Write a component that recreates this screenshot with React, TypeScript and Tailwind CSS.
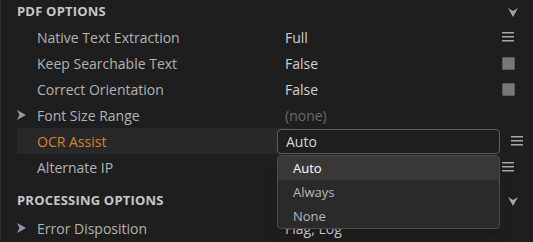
import React from 'react';

type Row = {
  label: string;
  value: string;
  kind?: 'menu' | 'check';
  expandable?: boolean;
  muted?: boolean;
  active?: boolean;
};

const pdfRows: Row[] = [
  { label: 'Native Text Extraction', value: 'Full', kind: 'menu' },
  { label: 'Keep Searchable Text', value: 'False', kind: 'check' },
  { label: 'Correct Orientation', value: 'False', kind: 'check' },
  { label: 'Font Size Range', value: '(none)', expandable: true, muted: true },
  { label: 'OCR Assist', value: 'Auto', kind: 'menu', active: true },
  { label: 'Alternate IP', value: '', kind: 'menu' },
];

const ExpandArrow = () => (
  <svg width="9" height="10" viewBox="0 0 9 10">
    <polygon points="0,0 9,5 0,10 2.5,5" fill="#8d9aab" />
  </svg>
);

const CollapseArrow = () => (
  <svg width="10" height="9" viewBox="0 0 10 9">
    <polygon points="0,0 5,3 10,0 5,9" fill="#9ba6b6" />
  </svg>
);

const MenuIcon = () => (
  <svg width="12" height="10" viewBox="0 0 12 10">
    <rect x="0" y="0" width="12" height="1.5" fill="#a8a8a8" />
    <rect x="0" y="4" width="12" height="1.5" fill="#a8a8a8" />
    <rect x="0" y="8" width="12" height="1.5" fill="#a8a8a8" />
  </svg>
);

const CheckBox = () => (
  <div className="w-[13px] h-[13px] bg-[#787878] border border-[#5c5c5c] rounded-[1px]" />
);

const SectionHeader = ({ title, className = '' }: { title: string; className?: string }) => (
  <div className={`h-[23px] pt-[1px] flex items-center pl-[16px] pr-[15px] ${className}`}>
    <span className="flex-1 text-[13px] font-bold tracking-[0.2px] text-[#c6c6c6]">{title}</span>
    <CollapseArrow />
  </div>
);

const PropertyRow = ({ row }: { row: Row }) => (
  <div className="h-[26px] flex items-center">
    <div className={`h-full flex items-center w-[277px] ml-[16px] ${row.active ? 'bg-[#282828]' : ''}`}>
      <div className="w-[20px] flex items-center">{row.expandable && <ExpandArrow />}</div>
      <span className={`text-[14px] ${row.active ? 'text-[#d9822b]' : 'text-[#b3b3b3]'}`}>{row.label}</span>
    </div>
    {row.active ? (
      <div className="w-[223px] h-[25px] -ml-[17px] flex items-center pl-[8px] border border-[#5e5e5e] rounded-[4px] bg-[#1e1e1e] text-[14px] text-[#d6d6d6]">
        {row.value}
      </div>
    ) : (
      <span
        className={`w-[206px] -ml-[9px] text-[14px] ${row.muted ? 'text-[#6a6a6a]' : 'text-[#d2d2d2]'}`}
      >
        {row.value}
      </span>
    )}
    <div className="w-[33px] flex justify-center pl-[1px]">
      {row.kind === 'menu' && <MenuIcon />}
      {row.kind === 'check' && <CheckBox />}
    </div>
  </div>
);

export default function App() {
  return (
    <div
      className="relative w-[533px] h-[242px] overflow-hidden bg-[#1e1e1e] border-l border-[#2c2c2c]"
      style={{ fontFamily: '"Open Sans", "Noto Sans", sans-serif' }}
    >
      <SectionHeader title="PDF OPTIONS" />
      <div className="mt-[1px]">
        {pdfRows.map((r) => (
          <PropertyRow key={r.label} row={r} />
        ))}
      </div>
      <SectionHeader title="PROCESSING OPTIONS" className="mt-[9px]" />
      <div className="mt-[3px]">
        <PropertyRow row={{ label: 'Error Disposition', value: 'Flag, Log', expandable: true }} />
      </div>

      <div className="absolute left-[276px] top-[155px] w-[223px] bg-[#2a2a2a] border border-[#4b4b4b] rounded-[4px] shadow-lg">
        <div className="h-[24px] pt-[1px] flex items-center pl-[15px] bg-[#383838] text-[13px] text-white">Auto</div>
        <div className="h-[24px] pt-[1px] flex items-center pl-[15px] text-[13px] text-[#b8b8b8]">Always</div>
        <div className="h-[24px] pt-[1px] flex items-center pl-[15px] text-[13px] text-[#b8b8b8]">None</div>
      </div>
    </div>
  );
}
